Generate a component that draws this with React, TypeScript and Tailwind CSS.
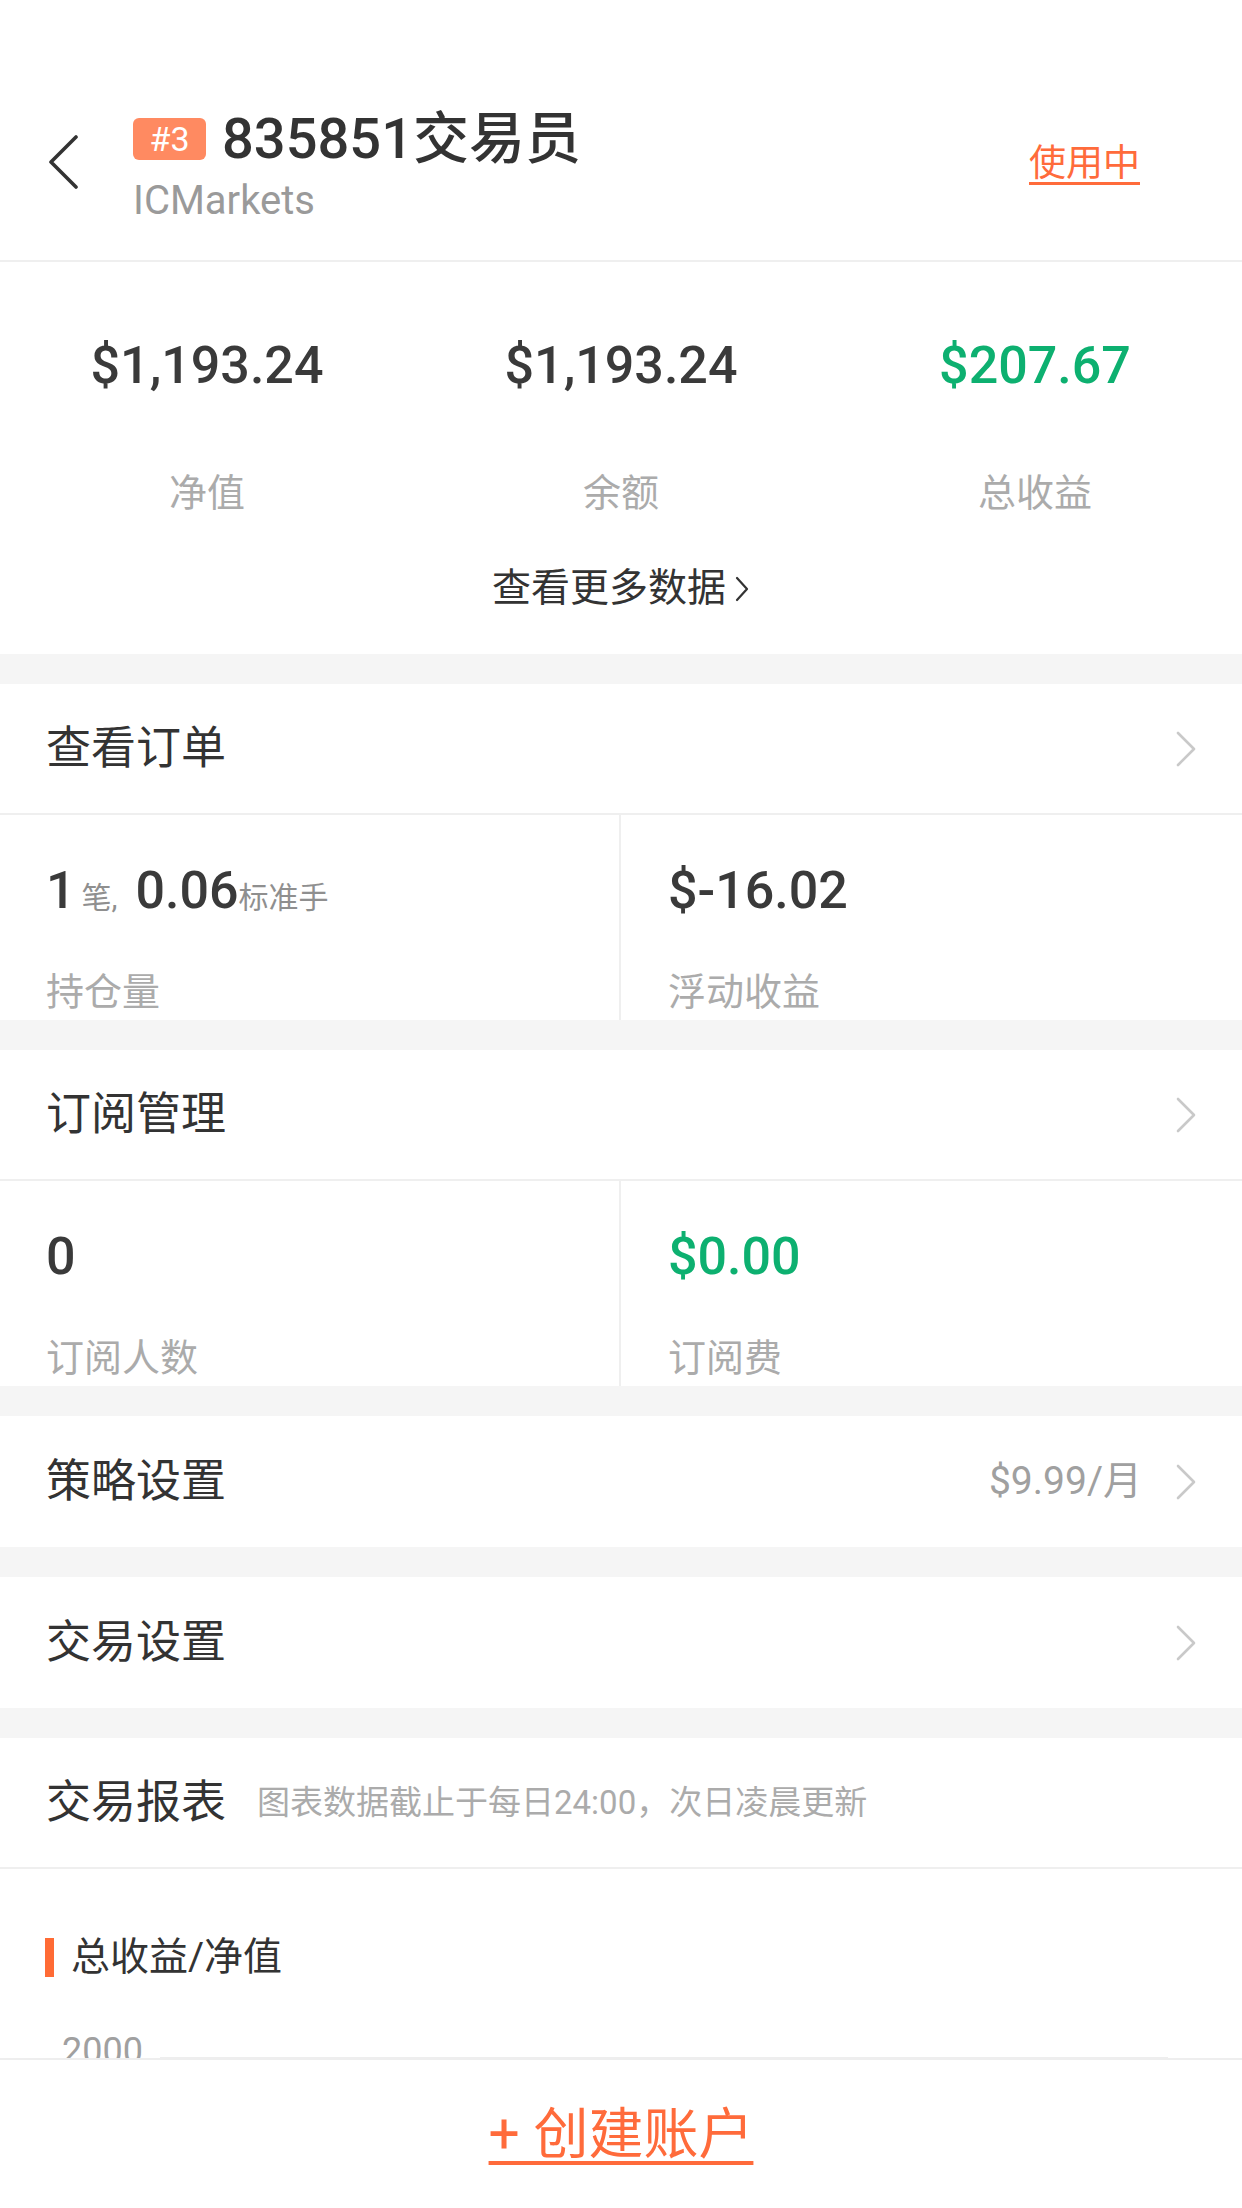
import React from 'react';

// 右向き矢印
const ChevronRight: React.FC<{ className?: string }> = ({ className }) => (
  <svg className={className} width="20" height="36" viewBox="0 0 20 36" fill="none">
    <polyline points="2,2 18,18 2,34" stroke="#c9c9c9" strokeWidth="2.6" strokeLinecap="round" strokeLinejoin="round" />
  </svg>
);

interface RowProps {
  title: string;
  extra?: string;
  border?: boolean;
}

const MenuRow: React.FC<RowProps> = ({ title, extra, border }) => (
  <div className={`flex items-center h-[131px] pl-[46px] pr-[46px] bg-white ${border ? 'border-b-2 border-[#efefef]' : ''}`}>
    <span className="text-[45px] leading-none text-[#333]">{title}</span>
    <div className="flex-1" />
    {extra && <span className="text-[39px] leading-none text-[#a0a0a0] mr-[34px]">{extra}</span>}
    <ChevronRight />
  </div>
);

const Gap: React.FC = () => <div className="h-[30px] bg-[#f5f5f5]" />;

interface StatCellProps {
  value: React.ReactNode;
  label: string;
  green?: boolean;
  divider?: boolean;
}

const StatCell: React.FC<StatCellProps> = ({ value, label, green, divider }) => (
  <div className={`flex flex-col pt-[50px] pb-[9px] ${divider ? 'pl-[46px] border-r-2 border-[#efefef]' : 'pl-[47px]'}`}>
    <div className={`text-[52px] leading-none font-medium ${green ? 'text-[#0db070]' : 'text-[#3a3a3a]'}`}>{value}</div>
    <div className="mt-[56px] text-[38px] leading-none text-[#ababab]">{label}</div>
  </div>
);

const App: React.FC = () => {
  return (
    <div className="w-[1242px] h-[2208px] flex flex-col overflow-hidden bg-white font-['Roboto','Noto_Sans_CJK_SC',sans-serif]">
      <div className="flex-1 overflow-hidden">
        {/* ヘッダー */}
        <div className="h-[262px] pt-[64px] border-b-2 border-[#efefef] flex items-center">
          <div className="w-[133px] pl-[48px]">
            <svg width="31" height="54" viewBox="0 0 31 54" fill="none">
              <polyline points="28,2 3,27 28,52" stroke="#333" strokeWidth="3.6" strokeLinecap="round" strokeLinejoin="round" />
            </svg>
          </div>
          <div className="flex flex-col">
            <div className="flex items-center mt-[8px]">
              <span className="w-[73px] h-[42px] rounded-[6px] bg-[#ff8a61] text-white text-[34px] leading-none flex items-center justify-center">#3</span>
              <span className="ml-[16px] text-[56px] leading-none font-medium text-[#333]">835851交易员</span>
            </div>
            <span className="mt-[14px] text-[40px] leading-none text-[#9a9a9a]">ICMarkets</span>
          </div>
          <div className="flex-1" />
          <span className="mr-[102px] mt-[2px] text-[37px] leading-none text-[#ff6b3b] underline decoration-[3px] underline-offset-[6px]">使用中</span>
        </div>

        {/* 概要 */}
        <div className="pt-[78px] pb-[46px]">
          <div className="grid grid-cols-3">
            {[
              { v: '$1,193.24', l: '净值', g: false },
              { v: '$1,193.24', l: '余额', g: false },
              { v: '$207.67', l: '总收益', g: true },
            ].map(item => (
              <div key={item.l} className="flex flex-col items-center">
                <span className={`text-[52px] leading-none font-medium ${item.g ? 'text-[#0db070]' : 'text-[#3a3a3a]'}`}>{item.v}</span>
                <span className="mt-[82px] text-[38px] leading-none text-[#ababab]">{item.l}</span>
              </div>
            ))}
          </div>
          <div className="mt-[57px] flex items-center justify-center">
            <span className="text-[39px] leading-none text-[#333]">查看更多数据</span>
            <svg className="ml-[8px]" width="16" height="30" viewBox="0 0 16 30" fill="none">
              <polyline points="3,4 13,15 3,26" stroke="#333" strokeWidth="2.2" strokeLinecap="round" strokeLinejoin="round" />
            </svg>
          </div>
        </div>

        <Gap />
        <MenuRow title="查看订单" border />
        <div className="grid grid-cols-2">
          <StatCell
            divider
            label="持仓量"
            value={
              <span className="flex items-baseline">
                1<span className="text-[30px] font-normal text-[#8f8f8f] ml-[6px]">笔,</span>
                <span className="ml-[18px]">0.06</span>
                <span className="text-[30px] font-normal text-[#8f8f8f]">标准手</span>
              </span>
            }
          />
          <StatCell label="浮动收益" value="$-16.02" />
        </div>

        <Gap />
        <MenuRow title="订阅管理" border />
        <div className="grid grid-cols-2">
          <StatCell divider label="订阅人数" value="0" />
          <StatCell green label="订阅费" value="$0.00" />
        </div>

        <Gap />
        <MenuRow title="策略设置" extra="$9.99/月" />
        <Gap />
        <MenuRow title="交易设置" />
        <Gap />

        {/* 交易报表 */}
        <div className="flex items-center h-[131px] pl-[46px] border-b-2 border-[#efefef]">
          <span className="text-[45px] leading-none text-[#333]">交易报表</span>
          <span className="ml-[31px] text-[33px] leading-none text-[#ababab]">图表数据截止于每日24:00，次日凌晨更新</span>
        </div>

        <div className="pt-[69px]">
          <div className="flex items-center pl-[45px]">
            <span className="w-[9px] h-[39px] bg-[#ff6b35]" />
            <span className="ml-[17px] text-[39px] leading-none text-[#333]">总收益/净值</span>
          </div>
          <div className="mt-[56px] flex items-start pl-[62px] pr-[74px]">
            <span className="text-[36px] leading-none text-[#a0a0a0]">2000</span>
            <div className="ml-[17px] mt-[24px] flex-1 h-[2px] bg-[#eeeeee]" />
          </div>
        </div>
      </div>

      {/* 下部ボタン */}
      <div className="h-[150px] border-t-2 border-[#eeeeee] bg-white flex items-center justify-center">
        <span className="text-[55px] leading-none text-[#ff6b3b] underline decoration-[4px] underline-offset-[8px]">+ 创建账户</span>
      </div>
    </div>
  );
};

export default App;
